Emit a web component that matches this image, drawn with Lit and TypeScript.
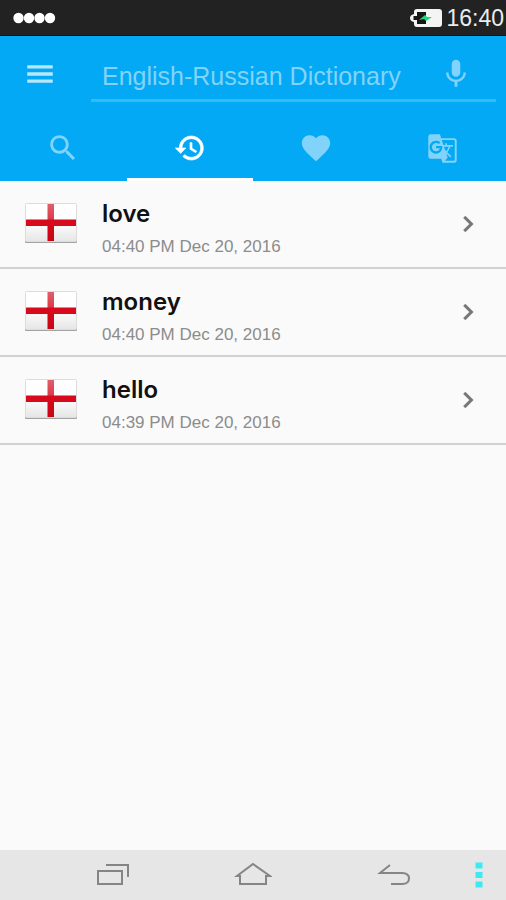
import { LitElement, html, css, svg } from "lit";
import { customElement, property, state } from "lit/decorators.js";

interface Entry {
  word: string;
  time: string;
}

const icon = (path: string, variant = "") =>
  html`<svg class="icon ${variant}" viewBox="0 0 24 24" aria-hidden="true">${svg`<path fill="currentColor" d=${path}></path>`}</svg>`;

const MENU = "M3 18.200h18v-2.400H3v2.400zm0-5h18v-2.400H3v2.400zm0-7.400v2.400h18V5.800H3z";
const MIC =
  "M12 14c1.66 0 2.99-1.34 2.99-3L15 5c0-1.66-1.34-3-3-3S9 3.34 9 5v6c0 1.66 1.34 3 3 3zm5.3-3c0 3-2.54 5.1-5.3 5.1S6.7 14 6.7 11H5c0 3.41 2.72 6.23 6 6.72V21h2v-3.28c3.28-.48 6-3.3 6-6.72h-1.7z";
const SEARCH =
  "M15.5 14h-.79l-.28-.27C15.41 12.59 16 11.11 16 9.5 16 5.91 13.09 3 9.5 3S3 5.91 3 9.5 5.91 16 9.5 16c1.61 0 3.09-.59 4.23-1.57l.27.28v.79l5 4.99L20.49 19l-4.99-5zm-6 0C7.01 14 5 11.99 5 9.5S7.01 5 9.5 5 14 7.01 14 9.5 11.99 14 9.5 14z";
const HISTORY =
  "M13 3c-4.97 0-9 4.03-9 9H1l3.89 3.89.07.14L9 12H6c0-3.87 3.13-7 7-7s7 3.13 7 7-3.13 7-7 7c-1.93 0-3.68-.79-4.94-2.06l-1.42 1.42C8.27 19.99 10.51 21 13 21c4.97 0 9-4.03 9-9s-4.03-9-9-9zm-1 5v5l4.28 2.54.72-1.21-3.5-2.08V8H12z";
const HEART =
  "M12 21.35l-1.45-1.32C5.4 15.36 2 12.28 2 8.5 2 5.42 4.42 3 7.5 3c1.74 0 3.41.81 4.5 2.09C13.09 3.81 14.76 3 16.5 3 19.58 3 22 5.42 22 8.5c0 3.78-3.4 6.86-8.55 11.54L12 21.35z";
const TRANSLATE =
  "M21 4H11l-1-3H3c-1.1 0-2 .9-2 2v15c0 1.1.9 2 2 2h8l1 3h9c1.1 0 2-.9 2-2V6c0-1.1-.9-2-2-2zM7 16c-2.76 0-5-2.24-5-5s2.24-5 5-5c1.35 0 2.48.5 3.35 1.3L9.03 8.57c-.38-.36-1.04-.78-2.03-.78-1.74 0-3.15 1.44-3.15 3.21S5.26 14.21 7 14.21c2.01 0 2.84-1.44 2.92-2.41H7v-1.71h4.68c.07.31.12.61.12 1.02C11.8 13.97 9.89 16 7 16zm6.17-5.42h3.7c-.43 1.25-1.11 2.43-2.05 3.47-.31-.35-.6-.72-.86-1.1l-.79-2.37zm8.33 9.92c0 .55-.45 1-1 1H14l2-2.5-1.04-3.1 3.1 3.1.92-.92-3.3-3.25.02-.02c1.13-1.25 1.93-2.69 2.4-4.22H20v-1.3h-4.53V8h-1.29v1.29h-1.44L11.46 5.5h9.04c.55 0 1 .45 1 1v14z";
const CHEVRON = "M10 6L8.59 7.41 13.17 12l-4.58 4.59L10 18l6-6z";

@customElement("status-bar")
class StatusBar extends LitElement {
  static styles = css`
    :host {
      display: flex;
      align-items: center;
      justify-content: space-between;
      height: 36px;
      padding: 0 2px 0 12px;
      box-sizing: border-box;
      background: #222;
      border-bottom: 1px solid #111;
      color: #ececec;
    }
    .signal {
      width: 44px;
      height: 12px;
    }
    .right {
      display: flex;
      align-items: center;
      gap: 3px;
      padding-top: 1px;
      font-size: 23px;
      line-height: 34px;
    }
    .battery {
      width: 34px;
      height: 20px;
    }
  `;

  render() {
    return html`
      <svg class="signal" viewBox="0 0 44 12" role="img" aria-label="Signal">
        ${[6.5, 17, 27.5, 38].map((x) => svg`<circle cx=${x} cy="6" r="5.2" fill="#fff"></circle>`)}
      </svg>
      <div class="right">
        <svg class="battery" viewBox="0 0 34 20" role="img" aria-label="Battery charging">
          <path d="M8 1h22q3 0 3 3v12q0 3-3 3H8q-3 0-3-3v-2Q1 13 1 10t4-4V4q0-3 3-3z" fill="#f4f4f4"></path>
          <path d="M8 4h9v12H8v-4H4.500V8H8z" fill="#161616"></path>
          <path d="M10 12l6-5 2 2h5l-6 4-2-2z" fill="#18d878"></path>
        </svg>
        <time>16:40</time>
      </div>
    `;
  }
}

@customElement("history-row")
class HistoryRow extends LitElement {
  @property({ attribute: false }) entry!: Entry;

  static styles = css`
    .row {
      display: flex;
      align-items: center;
      width: 100%;
      height: 88px;
      box-sizing: border-box;
      margin: 0;
      padding: 0 22px 0 24px;
      border: 0;
      border-bottom: 2px solid #d2d2d2;
      background: none;
      font-family: inherit;
      text-align: left;
      cursor: pointer;
    }
    .flag {
      flex: none;
      width: 54px;
      height: 42px;
      margin-right: 24px;
    }
    .text {
      flex: 1;
      display: flex;
      flex-direction: column;
      gap: 6px;
      padding-top: 10px;
    }
    .word {
      font: 600 24px/30px Inter, "Liberation Sans", sans-serif;
      color: #111;
    }
    .time {
      font-size: 17px;
      line-height: 24px;
      color: #8c8c8c;
    }
    .icon {
      flex: none;
      width: 32px;
      height: 32px;
      color: #757575;
      stroke: currentColor;
      stroke-width: 0.3;
    }
  `;

  render() {
    return html`
      <button class="row">
        <svg class="flag" viewBox="0 0 54 42" role="img" aria-label="English">
          <defs>
            <linearGradient id="cloth" x1="0" y1="0" x2="0" y2="1">
              <stop offset="0" stop-color="#fff"></stop>
              <stop offset="0.5" stop-color="#fdfdfd"></stop>
              <stop offset="1" stop-color="#e6e6e6"></stop>
            </linearGradient>
            <linearGradient id="cross" x1="0" y1="0" x2="0" y2="1">
              <stop offset="0" stop-color="#e0606a"></stop>
              <stop offset="0.42" stop-color="#dc3a48"></stop>
              <stop offset="0.46" stop-color="#d8081c"></stop>
              <stop offset="1" stop-color="#c80414"></stop>
            </linearGradient>
          </defs>
          <rect x="1" y="2" width="52" height="38" rx="1" fill="#a4a4a4"></rect>
          <rect x="1.500" y="0.500" width="51" height="38" rx="1" fill="url(#cloth)" stroke="#dcdcdc"></rect>
          <rect x="23.500" y="1" width="6.500" height="37" fill="url(#cross)"></rect>
          <rect x="2" y="16.500" width="50" height="6.500" fill="#d60a1c"></rect>
        </svg>
        <span class="text">
          <span class="word">${this.entry.word}</span>
          <span class="time">${this.entry.time}</span>
        </span>
        ${icon(CHEVRON)}
      </button>
    `;
  }
}

@customElement("app-root")
class AppRoot extends LitElement {
  @state() private active = 1;

  private tabs = [
    { label: "Search", path: SEARCH, variant: "" },
    { label: "History", path: HISTORY, variant: "bold" },
    { label: "Favourites", path: HEART, variant: "" },
    { label: "Translate", path: TRANSLATE, variant: "small" },
  ];

  private entries: Entry[] = [
    { word: "love", time: "04:40 PM Dec 20, 2016" },
    { word: "money", time: "04:40 PM Dec 20, 2016" },
    { word: "hello", time: "04:39 PM Dec 20, 2016" },
  ];

  static styles = css`
    :host {
      display: flex;
      flex-direction: column;
      min-height: 100vh;
      background: #fafafa;
      font-family: "Liberation Sans", Arial, sans-serif;
    }
    button {
      display: flex;
      align-items: center;
      justify-content: center;
      margin: 0;
      padding: 0;
      border: 0;
      background: none;
      color: inherit;
      cursor: pointer;
    }
    .icon {
      width: 34px;
      height: 34px;
    }
    .icon.bold {
      width: 32px;
      height: 32px;
      stroke: currentColor;
      stroke-width: 0.5;
    }
    .icon.small {
      width: 31px;
      height: 31px;
    }
    .bar {
      background: #03a9f4;
      color: #fff;
    }
    .top {
      display: flex;
      align-items: center;
      padding: 10px 10px 0 22px;
    }
    .menu {
      width: 36px;
      height: 56px;
      margin-right: 33px;
      color: #b8e6fc;
    }
    .field {
      flex: 1;
      display: flex;
      align-items: center;
      height: 56px;
      box-sizing: border-box;
      padding: 2px 23px 0 11px;
      border-bottom: 3px solid #35baf6;
    }
    .query {
      flex: 1;
      min-width: 0;
      height: 40px;
      margin: 0;
      padding: 5px 0 0;
      border: 0;
      outline: 0;
      background: none;
      color: #fff;
      font-family: inherit;
      font-size: 25px;
    }
    .query::placeholder {
      color: #82d3f9;
      opacity: 1;
    }
    .mic {
      color: #82d3f9;
    }
    .tabs {
      display: grid;
      grid-template-columns: repeat(4, 1fr);
    }
    .tab {
      height: 79px;
      padding-top: 16px;
      box-sizing: border-box;
      border-bottom: 3px solid transparent;
      color: #82d3f9;
    }
    .tab.active {
      border-bottom-color: #fff;
      color: #fff;
    }
    .list {
      flex: 1;
      margin: 0;
      padding: 0;
      list-style: none;
    }
    .nav {
      display: grid;
      grid-template-columns: repeat(3, 1fr) 30px;
      height: 50px;
      padding: 0 12px 0 43px;
      background: #e6e6e6;
    }
    .key {
      width: 38px;
      height: 26px;
      fill: none;
      stroke: #858585;
      stroke-width: 2;
    }
    .more {
      width: 8px;
      height: 26px;
      fill: #3ceaf6;
    }
  `;

  render() {
    return html`
      <status-bar></status-bar>
      <header class="bar">
        <div class="top">
          <button class="menu" aria-label="Menu">${icon(MENU)}</button>
          <div class="field">
            <input class="query" type="text" aria-label="Search the dictionary" placeholder="English-Russian Dictionary" />
            <button class="mic" aria-label="Voice input">${icon(MIC)}</button>
          </div>
        </div>
        <div class="tabs" role="tablist">
          ${this.tabs.map(
            (t, i) => html`<button
              class="tab ${i === this.active ? "active" : ""}"
              role="tab"
              aria-label=${t.label}
              aria-selected=${i === this.active ? "true" : "false"}
              @click=${() => (this.active = i)}
            >
              ${icon(t.path, t.variant)}
            </button>`
          )}
        </div>
      </header>
      <ul class="list">
        ${this.entries.map((e) => html`<li><history-row .entry=${e}></history-row></li>`)}
      </ul>
      <nav class="nav">
        <button aria-label="Recent apps">
          <svg class="key" viewBox="0 0 38 26">
            <rect x="4" y="9" width="24" height="13"></rect>
            <path d="M12 3h22v12"></path>
          </svg>
        </button>
        <button aria-label="Home">
          <svg class="key" viewBox="0 0 38 26">
            <path d="M6 14H3L19 2l17 12h-4v8H6v-8z"></path>
          </svg>
        </button>
        <button aria-label="Back">
          <svg class="key" viewBox="0 0 38 26">
            <path d="M15 3L5 11h22q7 0 7 5.500T27 22H16"></path>
          </svg>
        </button>
        <button aria-label="More">
          <svg class="more" viewBox="0 0 8 26">
            <rect x="0.500" y="0.500" width="7" height="6"></rect>
            <rect x="0.500" y="10" width="7" height="6"></rect>
            <rect x="0.500" y="19.500" width="7" height="6"></rect>
          </svg>
        </button>
      </nav>
    `;
  }
}
